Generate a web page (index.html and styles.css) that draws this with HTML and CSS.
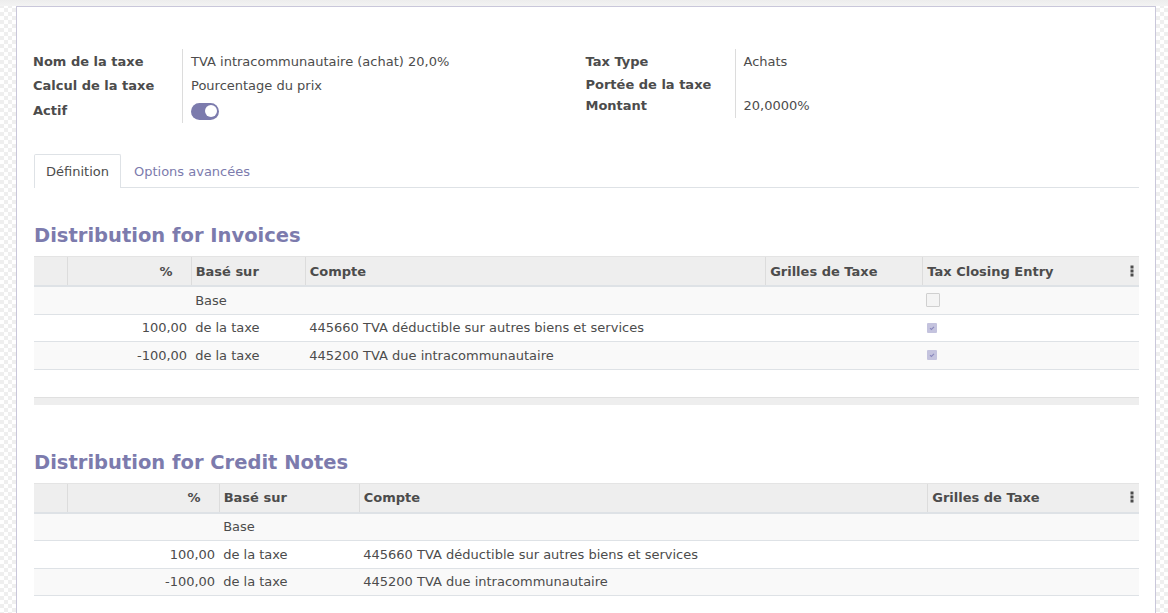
FILE: index.html
```html
<!DOCTYPE html>
<html lang="fr">
<head>
<meta charset="utf-8">
<title>Taxe</title>
<link rel="stylesheet" href="styles.css">
</head>
<body>
<div class="sheet">
  <div class="groups">
    <div class="group">
      <div class="row r24"><div class="label">Nom de la taxe</div><div class="value">TVA intracommunautaire (achat) 20,0%</div></div>
      <div class="row r24"><div class="label">Calcul de la taxe</div><div class="value">Pourcentage du prix</div></div>
      <div class="row r26"><div class="label">Actif</div><div class="value"><span class="switch"><span class="knob"></span></span></div></div>
    </div>
    <div class="group">
      <div class="row r24"><div class="label">Tax Type</div><div class="value">Achats</div></div>
      <div class="row r23"><div class="label">Portée de la taxe</div><div class="value"></div></div>
      <div class="row r22 top"><div class="label">Montant</div><div class="value">20,0000%</div></div>
    </div>
  </div>

  <div class="tabs">
    <div class="tab active">Définition</div>
    <div class="tab">Options avancées</div>
  </div>

  <h2 class="section-title first">Distribution for Invoices</h2>
  <table class="grid">
    <colgroup>
      <col class="c-handle"><col class="c1-pct"><col class="c1-base"><col class="c1-acc"><col class="c1-grid"><col class="c1-close">
    </colgroup>
    <thead>
      <tr>
        <th></th>
        <th class="num">%</th>
        <th>Basé sur</th>
        <th>Compte</th>
        <th>Grilles de Taxe</th>
        <th class="last"><span>Tax Closing Entry</span><svg class="kebab" width="4" height="12" viewBox="0 0 4 12"><rect x="0.5" y="0.5" width="3" height="3" fill="#4c4c4c"/><rect x="0.5" y="4.5" width="3" height="3" fill="#4c4c4c"/><rect x="0.5" y="8.5" width="3" height="3" fill="#4c4c4c"/></svg></th>
      </tr>
    </thead>
    <tbody>
      <tr class="odd">
        <td></td><td class="num"></td><td>Base</td><td></td><td></td>
        <td><span class="cb"></span></td>
      </tr>
      <tr>
        <td></td><td class="num">100,00</td><td>de la taxe</td><td>445660 TVA déductible sur autres biens et services</td><td></td>
        <td><svg class="cb-checked" width="10" height="10" viewBox="0 0 10 10"><rect width="10" height="10" rx="1" fill="#c4c3de"/><path d="M3 5.2 L4.4 6.5 L7 3.8" stroke="#8a88bd" stroke-width="1.1" fill="none"/></svg></td>
      </tr>
      <tr class="odd">
        <td></td><td class="num">-100,00</td><td>de la taxe</td><td>445200 TVA due intracommunautaire</td><td></td>
        <td><svg class="cb-checked" width="10" height="10" viewBox="0 0 10 10"><rect width="10" height="10" rx="1" fill="#c4c3de"/><path d="M3 5.2 L4.4 6.5 L7 3.8" stroke="#8a88bd" stroke-width="1.1" fill="none"/></svg></td>
      </tr>
      <tr class="spacer"><td colspan="6"></td></tr>
    </tbody>
    <tfoot>
      <tr><td colspan="6"></td></tr>
    </tfoot>
  </table>

  <h2 class="section-title second">Distribution for Credit Notes</h2>
  <table class="grid">
    <colgroup>
      <col class="c-handle"><col class="c2-pct"><col class="c2-base"><col class="c2-acc"><col class="c2-grid">
    </colgroup>
    <thead>
      <tr>
        <th></th>
        <th class="num">%</th>
        <th>Basé sur</th>
        <th>Compte</th>
        <th class="last"><span>Grilles de Taxe</span><svg class="kebab" width="4" height="12" viewBox="0 0 4 12"><rect x="0.5" y="0.5" width="3" height="3" fill="#4c4c4c"/><rect x="0.5" y="4.5" width="3" height="3" fill="#4c4c4c"/><rect x="0.5" y="8.5" width="3" height="3" fill="#4c4c4c"/></svg></th>
      </tr>
    </thead>
    <tbody>
      <tr class="odd">
        <td></td><td class="num"></td><td>Base</td><td></td><td></td>
      </tr>
      <tr>
        <td></td><td class="num">100,00</td><td>de la taxe</td><td>445660 TVA déductible sur autres biens et services</td><td></td>
      </tr>
      <tr class="odd">
        <td></td><td class="num">-100,00</td><td>de la taxe</td><td>445200 TVA due intracommunautaire</td><td></td>
      </tr>
      <tr class="spacer"><td colspan="5"></td></tr>
    </tbody>
    <tfoot>
      <tr><td colspan="5"></td></tr>
    </tfoot>
  </table>
</div>
</body>
</html>
```

FILE: styles.css
```css
html, body {
  margin: 0;
  padding: 0;
}
body {
  font-family: "DejaVu Sans", Verdana, sans-serif;
  font-size: 13px;
  color: #4c4c4c;
  background:
    linear-gradient(#ededed, #f3f3f3) top left / 100% 6px no-repeat,
    repeating-conic-gradient(#efefef 0% 25%, #ffffff 0% 50%) 0 0 / 8px 8px;
  min-height: 613px;
  overflow: hidden;
}
.sheet {
  margin: 6px 12px 0 16px;
  background: #fff;
  border: 1px solid #c9c7da;
  border-bottom: none;
  padding: 42px 16px 40px 17px;
  min-height: 700px;
}
.groups {
  display: grid;
  grid-template-columns: 1fr 1fr;
}
.group {
  display: flex;
  flex-direction: column;
}
.row {
  display: grid;
  grid-template-columns: 149px 1fr;
}
.r24 { height: 24px; }
.r23 { height: 23px; }
.r22 { height: 22px; }
.r26 { height: 26px; }
.label {
  font-weight: bold;
  border-right: 1px solid #dcdcdc;
  display: flex;
  align-items: center;
  margin-left: -1px;
}
.value {
  display: flex;
  align-items: center;
  padding-left: 8px;
}
.row.top .label,
.row.top .value {
  align-items: flex-start;
  padding-top: 2px;
}
.switch {
  display: inline-block;
  width: 28px;
  height: 17px;
  border-radius: 9px;
  background: #7c7bad;
  position: relative;
  margin-top: 2px;
}
.knob {
  position: absolute;
  right: 2px;
  top: 2.5px;
  width: 12px;
  height: 12px;
  border-radius: 50%;
  background: #fff;
}
.tabs {
  display: flex;
  margin-top: 31px;
  border-bottom: 1px solid #dee2e6;
  height: 33px;
}
.tab {
  height: 33px;
  padding: 0 12px;
  display: flex;
  align-items: center;
  color: #7c7bad;
  border: 1px solid transparent;
  border-bottom: none;
  box-sizing: border-box;
  border-radius: 2px 2px 0 0;
}
.tab.active {
  color: #4c4c4c;
  background: #fff;
  border-color: #dee2e6;
  height: 34px;
  padding: 0 11px;
}
.section-title {
  color: #7c7bad;
  font-size: 19.5px;
  font-weight: bold;
  line-height: 23px;
  margin: 0 0 9px;
}
.section-title.first { margin-top: 36px; }
.section-title.second { margin-top: 46px; }
.grid {
  width: 100%;
  border-collapse: collapse;
  table-layout: fixed;
}
.c-handle { width: 33px; }
.c1-pct { width: 124px; }
.c1-base { width: 114px; }
.c1-acc { width: 460px; }
.c1-grid { width: 157px; }
.c1-close { width: 216px; }
.c2-pct { width: 152px; }
.c2-base { width: 140px; }
.c2-acc { width: 568px; }
.c2-grid { width: 211px; }
.grid thead th {
  background: #eeeeee;
  height: 28px;
  padding: 0 4px;
  text-align: left;
  font-weight: bold;
  border-left: 1px solid #dcdcdc;
  border-top: 1px solid #e4e4e4;
  border-bottom: 2px solid #dee2e6;
  white-space: nowrap;
}
.grid thead th:first-child { border-left: none; }
.grid thead th.num { text-align: right; padding-right: 18px; }
.grid thead th.last {
  padding-right: 5px;
}
.grid thead th.last span { float: left; }
.kebab { float: right; margin-top: 1px; }
.grid tbody td {
  height: 26.5px;
  padding: 0 4px;
  border-bottom: 1px solid #dee2e6;
  white-space: nowrap;
}
.grid tbody tr.odd td { background: #f9f9f9; }
.grid td.num { text-align: right; }
.grid tbody tr.spacer td {
  height: 27px;
  border-bottom: none;
  background: #fff;
}
.grid tfoot td {
  height: 7px;
  padding: 0;
  background: #eeeeee;
  border-top: 1px solid #e0e0e0;
}
.cb {
  display: block;
  width: 12px;
  height: 12px;
  border: 1px solid #d0d0d0;
  background: #f4f4f4;
  border-radius: 1px;
  margin-left: -1px;
}
.cb-checked { display: block; }
```
